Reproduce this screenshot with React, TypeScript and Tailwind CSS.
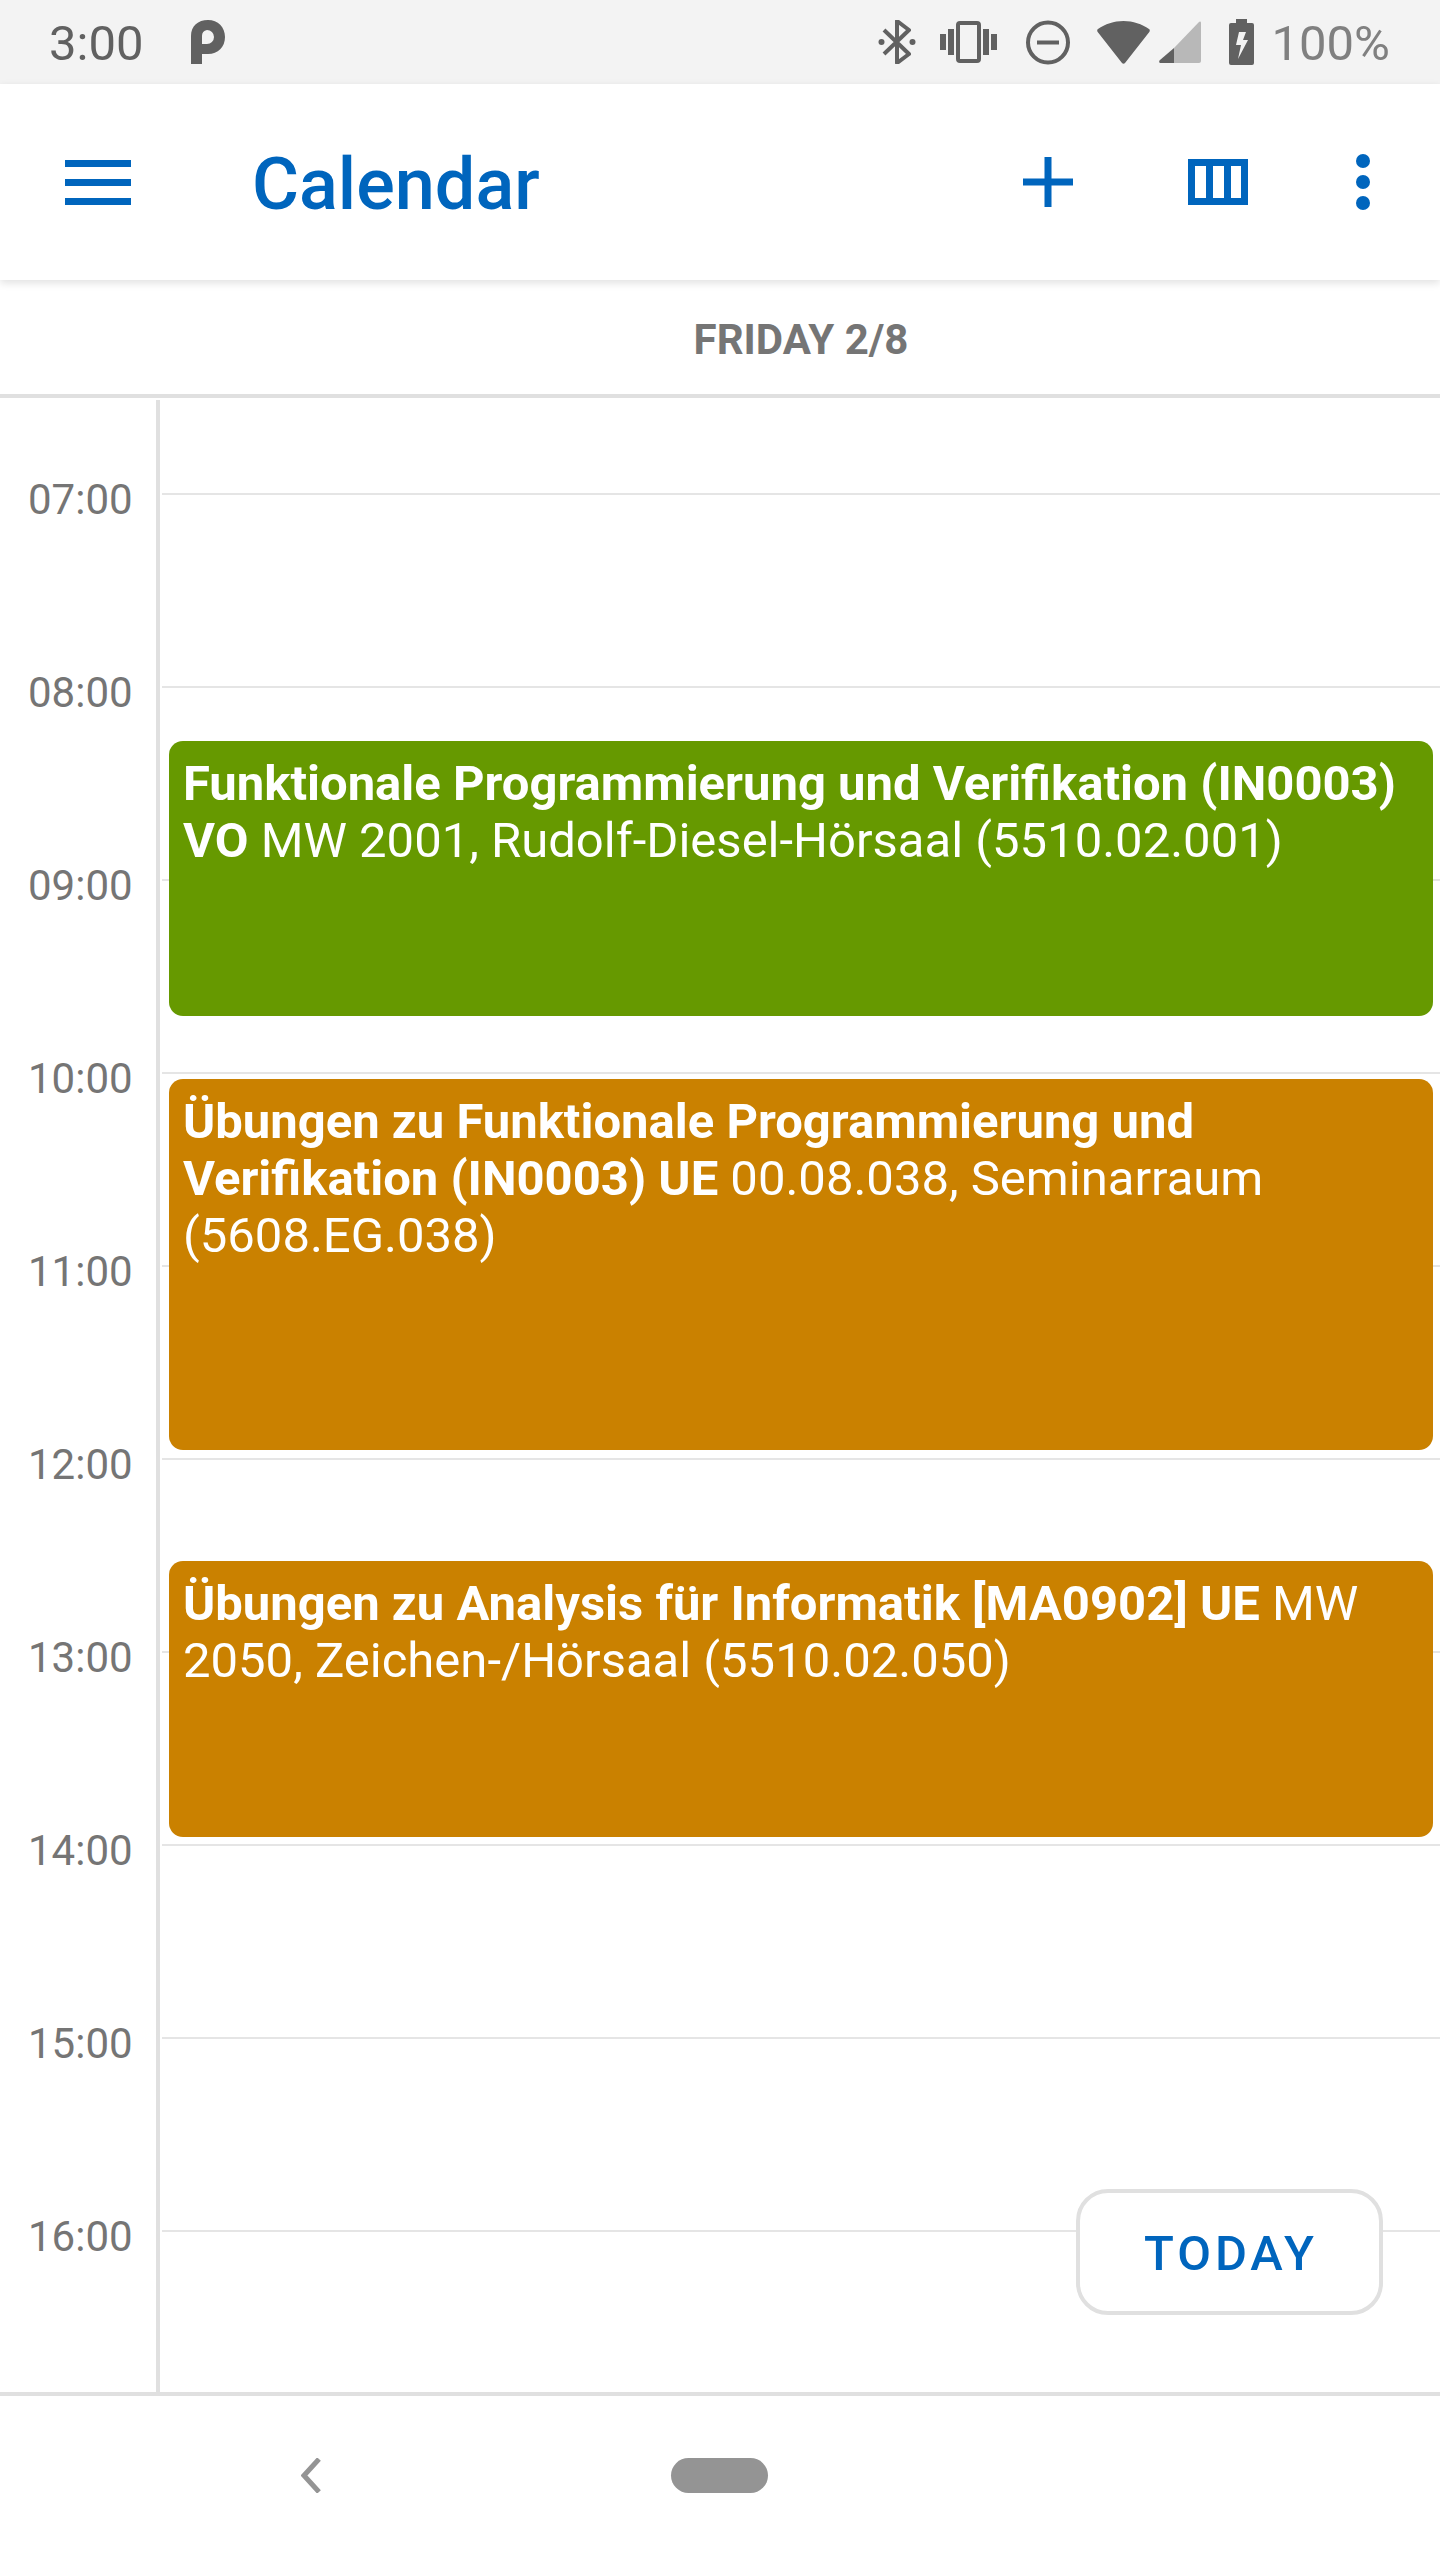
import React from "react";

const hours = ["07:00", "08:00", "09:00", "10:00", "11:00", "12:00", "13:00", "14:00", "15:00", "16:00"];

const events = [
  {
    title: "Funktionale Programmierung und Verifikation (IN0003) VO",
    place: " MW 2001, Rudolf-Diesel-Hörsaal (5510.02.001)",
    className: "top-[343px] h-[275px] bg-[#669900]",
  },
  {
    title: "Übungen zu Funktionale Programmierung und Verifikation (IN0003) UE",
    place: " 00.08.038, Seminarraum (5608.EG.038)",
    className: "top-[681px] h-[371px] bg-[#ca8100]",
  },
  {
    title: "Übungen zu Analysis für Informatik [MA0902] UE",
    place: " MW 2050, Zeichen-/Hörsaal (5510.02.050)",
    className: "top-[1163px] h-[276px] bg-[#ca8100]",
  },
];

function StatusBar() {
  return (
    <div className="h-[84px] bg-[#f3f3f3] flex items-center pl-[49px] pr-[50px] text-[49px] leading-none">
      <span className="pt-[2px] text-[#616161]">3:00</span>
      <svg className="ml-[48px] w-[34px] h-[44px]" viewBox="0 0 34 44">
        <path
          fill="#616161"
          fillRule="evenodd"
          d="M0 44V16C0 6 7 0 17 0s17 7 17 17-7 17-17 17h-6v10H0zM11 24h5a7 7 0 0 0 0-14 6 6 0 0 0-5 6v8z"
        />
      </svg>

      <div className="ml-auto flex items-center">
        {/* bluetooth */}
        <svg className="w-[38px] h-[44px]" viewBox="0 0 38 44" fill="none" stroke="#616161" strokeWidth="4">
          <path d="M6 10l25 24-12 9V1l12 9-25 24" strokeLinejoin="round" />
          <circle cx="3.5" cy="22" r="3" fill="#616161" stroke="none" />
          <circle cx="34.5" cy="22" r="3" fill="#616161" stroke="none" />
        </svg>
        {/* vibrate */}
        <svg className="ml-[24px] w-[57px] h-[42px]" viewBox="0 0 57 42" fill="#616161">
          <rect x="0" y="13" width="6" height="16" />
          <rect x="8" y="8" width="6" height="26" />
          <rect x="43" y="8" width="6" height="26" />
          <rect x="51" y="13" width="6" height="16" />
          <rect x="18" y="2" width="21" height="38" rx="2" fill="none" stroke="#616161" strokeWidth="4" />
        </svg>
        {/* do not disturb */}
        <svg className="ml-[29px] w-[44px] h-[45px]" viewBox="0 0 44 45" fill="none" stroke="#616161" strokeWidth="4">
          <circle cx="22" cy="22.5" r="20" />
          <path d="M11 22.5h22" />
        </svg>
        {/* wifi */}
        <svg className="ml-[27px] w-[53px] h-[43px]" viewBox="0 0 53 43">
          <path
            fill="#616161"
            d="M1 8C8 3 17 0 26.5 0S45 3 52 8c1 .7 1 2 .3 3L28 42c-.8 1-2.2 1-3 0L.7 11C0 10 0 8.700 1 8z"
          />
        </svg>
        {/* signal */}
        <svg className="ml-[9px] w-[42px] h-[42px]" viewBox="0 0 42 42">
          <path fill="#b8b8b8" d="M15 27L40 1c1-1 2-.5 2 1v38c0 1-1 2-2 2H15z" />
          <path fill="#616161" d="M15 27v15H2c-2 0-2.500-1.500-1-3z" />
        </svg>
        {/* battery */}
        <svg className="ml-[28px] w-[25px] h-[46px]" viewBox="0 0 25 46">
          <path
            fill="#616161"
            fillRule="evenodd"
            d="M7 0h11v4h5a2 2 0 0 1 2 2v38a2 2 0 0 1-2 2H2a2 2 0 0 1-2-2V6a2 2 0 0 1 2-2h5zM10 13l-3 13h5l-3 14 10-19h-5l3-8z"
          />
        </svg>
        <span className="ml-[17px] pt-[2px] text-[#808080]">100%</span>
      </div>
    </div>
  );
}

function Toolbar() {
  return (
    <div className="relative z-10 h-[196px] bg-white flex items-center shadow-[0_3px_8px_rgba(0,0,0,0.12)] text-[#0065bd]">
      <div className="ml-[65px] w-[66px] flex flex-col gap-[12px]">
        <div className="h-[7px] bg-[#0065bd]" />
        <div className="h-[7px] bg-[#0065bd]" />
        <div className="h-[7px] bg-[#0065bd]" />
      </div>
      <div className="ml-[121px] mt-[6px] text-[72px] font-medium leading-none">Calendar</div>

      <div className="ml-auto flex items-center">
        <svg className="w-[50px] h-[50px]" viewBox="0 0 50 50" fill="#0065bd">
          <rect x="21.500" y="0" width="7" height="50" />
          <rect x="0" y="21.500" width="50" height="7" />
        </svg>
        <svg className="ml-[115px] w-[60px] h-[46px]" viewBox="0 0 60 46" fill="#0065bd">
          <path
            fillRule="evenodd"
            d="M0 0h60v46H0zM7 7v32h11V7zM25 7v32h11V7zM43 7v32h10V7z"
          />
        </svg>
        <svg className="ml-[108px] mr-[70px] w-[14px] h-[56px]" viewBox="0 0 14 56" fill="#0065bd">
          <circle cx="7" cy="7" r="7" />
          <circle cx="7" cy="28" r="7" />
          <circle cx="7" cy="49" r="7" />
        </svg>
      </div>
    </div>
  );
}

function DayView() {
  return (
    <div className="relative h-[1994px] overflow-hidden flex">
      <div className="w-[160px] pt-[79px] border-r-4 border-[#e0e0e0] mt-[2px] shrink-0">
        {hours.map((h) => (
          <div key={h} className="h-[193px] pl-[28px] text-[42px] leading-[42px] text-[#757575]">
            {h}
          </div>
        ))}
      </div>
      <div className="flex-1 pt-[95px] ml-[2px]">
        {hours.map((h) => (
          <div key={h} className="h-[193px] border-t-2 border-[#e5e5e5]" />
        ))}
      </div>

      {events.map((ev) => (
        <div
          key={ev.title}
          className={`absolute left-[169px] right-[7px] rounded-[14px] pl-[14px] pr-[15px] pt-[14px] text-[49px] leading-[57px] text-white ${ev.className}`}
        >
          <span className="font-bold">{ev.title}</span>
          {ev.place}
        </div>
      ))}

      <button className="absolute left-[1076px] top-[1791px] w-[307px] h-[126px] pt-[3px] pl-[3px] rounded-[32px] border-4 border-[#e0e0e0] bg-white text-[49px] font-medium tracking-[4px] text-[#0065bd]">
        TODAY
      </button>
    </div>
  );
}

export default function App() {
  return (
    <div className="w-[1440px] h-[2560px] bg-white overflow-hidden font-['Roboto',sans-serif]">
      <StatusBar />
      <Toolbar />
      <div className="h-[118px] border-b-4 border-[#e0e0e0] pt-[36px] pl-[162px] text-center text-[42px] leading-[48px] font-bold text-[#757575]">
        FRIDAY 2/8
      </div>
      <DayView />
      <div className="border-t-4 border-[#e0e0e0] h-[168px] flex pl-[301px] pt-[62px]">
        <svg className="w-[20px] h-[35px]" viewBox="0 0 20 35" fill="none" stroke="#949494" strokeWidth="5">
          <path d="M18 1L3 17.500 18 34" />
        </svg>
        <div className="ml-[350px] w-[97px] h-[35px] rounded-full bg-[#949494]" />
      </div>
    </div>
  );
}
